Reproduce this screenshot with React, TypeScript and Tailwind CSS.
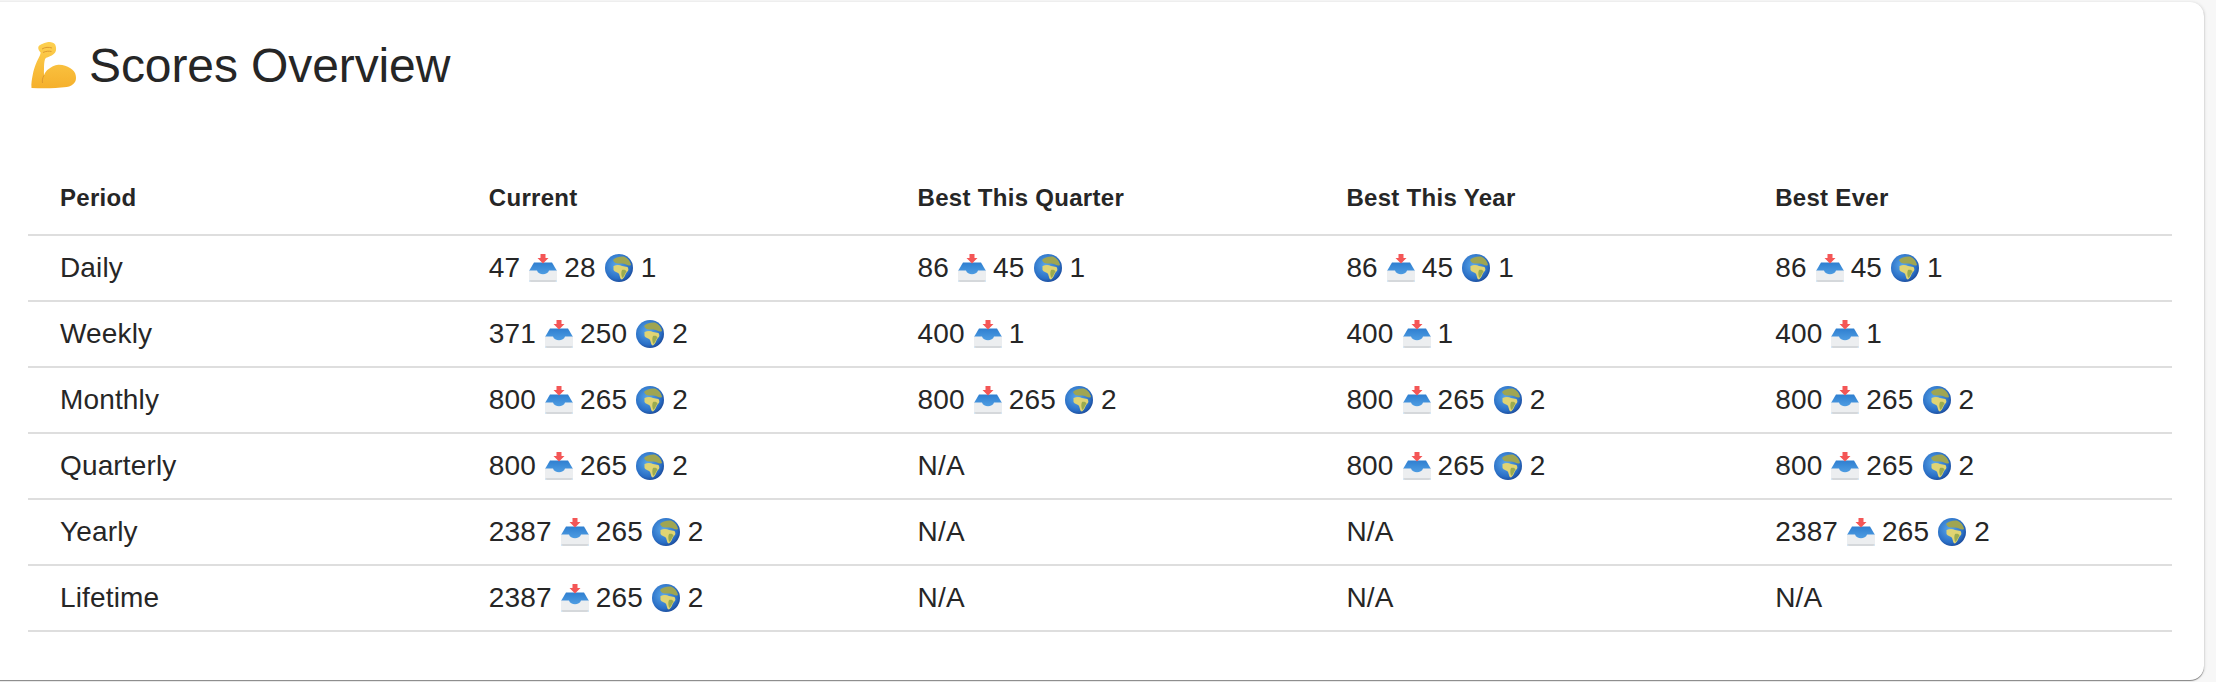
const MUSCLE = (
  <svg viewBox="0 0 46 48" className="w-[46px] h-[48px] shrink-0" aria-hidden="true">
    <defs>
      <linearGradient id="mg" x1="0" y1="0" x2="0" y2="1">
        <stop offset="0" stopColor="#fdd050" />
        <stop offset="1" stopColor="#f5b02c" />
      </linearGradient>
    </defs>
    <path
      d="M0.5 46 C0 41 1 37 1.7 33 C2.5 28 4 24 5.7 20 C7 17 9 14 9.7 10.7 C8 9 7 7 7.3 5 C8 3 10 2.5 11.7 1.7 C14 0.5 16.5 0 19 0 C22 0.3 24.5 2 24.7 4 C25.5 7 25 9.5 24 10.7 C22 13 19.5 14 17.3 15 C15.5 15.5 14.5 16 14 17.3 C13.2 20 13 23 13 26.7 C13 29 12.8 31 13 33.3 C14 30.5 15.5 28.5 17.3 27.3 C20 25 23.5 23 27.3 22.7 C32 22.5 36 24 39 26 C42 28 44.5 30.5 44.7 33.3 C45.3 36 45 38.5 44 40 C42 43 39 44.5 35.7 45 C24 46.5 12 46.5 0.5 46 Z"
      fill="url(#mg)"
    />
    <path d="M11 7 C14 5 18 5 21 6 M12 10.5 C15 9 18 9 20.5 9.5 M13 33.3 C11.5 36 11 38.5 11.5 41" fill="none" stroke="#d9942c" strokeWidth="0.9" />
  </svg>
);

function Tray() {
  return (
    <svg viewBox="0 0 28 28" className="w-[28px] h-[28px] shrink-0 ml-[1px] -mr-[1px]" aria-hidden="true">
      <defs>
        <linearGradient id="tb" x1="0" y1="0" x2="0" y2="1">
          <stop offset="0" stopColor="#2f7fd0" />
          <stop offset="1" stopColor="#63b0ee" />
        </linearGradient>
      </defs>
      <path d="M5 8.5 H23 L28 17 V26 a2 2 0 0 1 -2 2 H2 a2 2 0 0 1 -2 -2 V17 Z" fill="url(#tb)" />
      <path d="M0 16.5 H8 C9.5 21.5 18.5 21.5 20 16.5 H28 V26 a2 2 0 0 1 -2 2 H2 a2 2 0 0 1 -2 -2 Z" fill="#eceef0" />
      <path d="M1 26 H27 V26.5 a1.5 1.5 0 0 1 -1.5 1.5 H2.5 A1.5 1.5 0 0 1 1 26.5 Z" fill="#d5d8db" />
      <path d="M11.5 0 H16.5 V4 H19.5 L14 9.5 L8.5 4 H11.5 Z" fill="#f45656" />
    </svg>
  );
}

function Globe() {
  return (
    <svg viewBox="0 0 28 28" className="w-[28px] h-[28px] shrink-0 ml-[1px]" aria-hidden="true">
      <defs>
        <radialGradient id="gg" cx="0.42" cy="0.4" r="0.68">
          <stop offset="0" stopColor="#5aa8ea" />
          <stop offset="0.7" stopColor="#2a6fc6" />
          <stop offset="1" stopColor="#173f8c" />
        </radialGradient>
      </defs>
      <circle cx="14" cy="14" r="14" fill="url(#gg)" />
      <path d="M8 6 C10 3.5 15 2 19 2.5 C23 4 25.5 7.5 26 11 C24.5 12 23 11.5 21 10.5 C18 9 16 9.5 13 9.5 C11 9.5 9 8.5 8 6 Z" fill="#9fa552" />
      <path d="M8.5 12 C12 10.5 15 11 17 12 C19 12 20.5 13 22.5 13 C23.5 15 24 16 22 18 C20 20 20.5 23 17 25.5 C15 25.5 15 22 14 20 C13 18 10 18.5 8.5 16 Z" fill="#e0d473" />
      <path d="M17 16 C19 15.5 21 16 21.5 17.5 C20 19.5 19.5 22 17.5 24 C16 22 16 18 17 16 Z" fill="#9aab50" />
    </svg>
  );
}

type S = { a: number; i: number; g?: number } | null;

function Score({ s }: { s: S }) {
  if (!s) return <>N/A</>;
  return (
    <span className="inline-flex items-center gap-[8px]">
      <span>{s.a}</span>
      <Tray />
      <span>{s.i}</span>
      {s.g !== undefined && (
        <>
          <Globe />
          <span>{s.g}</span>
        </>
      )}
    </span>
  );
}

const a: S = { a: 800, i: 265, g: 2 };
const y: S = { a: 2387, i: 265, g: 2 };
const d: S = { a: 86, i: 45, g: 1 };
const w: S = { a: 400, i: 1 };

const ROWS: [string, S, S, S, S][] = [
  ["Daily", { a: 47, i: 28, g: 1 }, d, d, d],
  ["Weekly", { a: 371, i: 250, g: 2 }, w, w, w],
  ["Monthly", a, a, a, a],
  ["Quarterly", a, null, a, a],
  ["Yearly", y, null, null, y],
  ["Lifetime", y, null, null, null],
];

const HEAD = ["Period", "Current", "Best This Quarter", "Best This Year", "Best Ever"];

export default function App() {
  return (
    <div className="w-[2216px] h-[682px] bg-[#f7f7f7] overflow-hidden pt-[2px] font-['Liberation_Sans','Helvetica',sans-serif] text-[#262626]">
      <div className="w-[2220px] h-[678px] -ml-[16px] bg-white rounded-[14px] shadow-[0_1px_1px_rgba(0,0,0,0.45),1px_0_3px_rgba(0,0,0,0.1)] pl-[44px] pr-[32px] pt-[36px]">
        <div className="flex items-center gap-[12px] h-[56px] ml-[3px]">
          {MUSCLE}
          <h1 className="text-[48px] leading-[56px] font-normal tracking-[-0.1px]">Scores Overview</h1>
        </div>
        <div className="mt-[60px] text-[28px] tracking-[0.15px]">
          <div className="grid grid-cols-5 h-[82px] pt-[7px] items-center border-b-2 border-[#dedede] font-bold text-[24px] tracking-[0.3px]">
            {HEAD.map((h) => (
              <div key={h} className="pl-[32px]">{h}</div>
            ))}
          </div>
          {ROWS.map((r) => (
            <div key={r[0]} className="grid grid-cols-5 h-[66px] items-center border-b-2 border-[#dedede]">
              <div className="pl-[32px]">{r[0]}</div>
              {r.slice(1).map((c, i) => (
                <div key={i} className="pl-[32px]">
                  <Score s={c as S} />
                </div>
              ))}
            </div>
          ))}
        </div>
      </div>
    </div>
  );
}
